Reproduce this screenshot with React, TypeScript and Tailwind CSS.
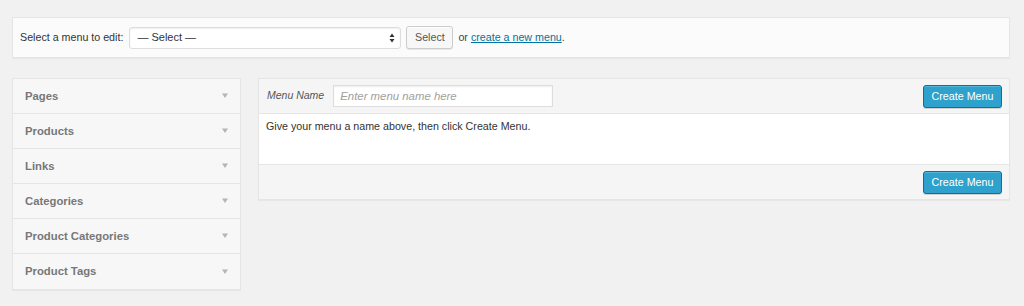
import React from 'react';

const boxes = ['Pages', 'Products', 'Links', 'Categories', 'Product Categories', 'Product Tags'];

function Arrow() {
  return (
    <svg width="8" height="6" viewBox="0 0 8 6" className="shrink-0" aria-hidden="true">
      <path d="M1 0.5h6L4 5z" fill="#b4b4b4" />
    </svg>
  );
}

function CreateButton() {
  return (
    <button className="h-[23px] w-[79px] rounded-[3px] border border-[#0074a2] bg-[#2ea2cc] text-[10.7px] leading-none text-white shadow-[inset_0_1px_0_rgba(120,200,230,0.5),0_1px_0_rgba(0,0,0,0.15)]">
      Create Menu
    </button>
  );
}

export default function App() {
  return (
    <div
      className="h-[306px] w-[1024px] overflow-hidden bg-[#f1f1f1] text-[10.7px] text-[#444]"
      style={{ fontFamily: '"Liberation Sans", Arial, sans-serif' }}
    >
      <div className="ml-[12px] mt-[17px] flex h-[41px] w-[998px] items-center border border-[#e5e5e5] bg-[#fbfbfb] pl-[7px] shadow-[0_1px_1px_rgba(0,0,0,0.04)]">
        <span className="text-[#333]">Select a menu to edit:</span>
        <div className="ml-[6px] flex h-[22px] w-[272px] items-center justify-between rounded-[3px] border border-[#ddd] bg-white pl-[7px] pr-[5px] text-[11px] text-[#333] shadow-[inset_0_1px_2px_rgba(0,0,0,0.07)]">
          <span>— Select —</span>
          <svg width="6" height="10" viewBox="0 0 6 10" aria-hidden="true">
            <path d="M3 0.5 5.5 4H0.5z M3 9.5 0.5 6h5z" fill="#333" />
          </svg>
        </div>
        <button className="ml-[5px] h-[23px] w-[47px] rounded-[3px] border border-[#ccc] bg-[#f7f7f7] text-[10.7px] text-[#555] shadow-[inset_0_1px_0_#fff,0_1px_0_rgba(0,0,0,0.08)]">
          Select
        </button>
        <span className="ml-[5px] text-[#444]">
          or{' '}
          <a className="text-[#0074a2] underline" href="#">
            create a new menu
          </a>
          .
        </span>
      </div>

      <div className="ml-[12px] mt-[20px] flex items-start gap-[17px]">
        <div className="w-[229px] border border-[#e5e5e5] bg-[#f7f7f7] shadow-[0_1px_1px_rgba(0,0,0,0.04)]">
          {boxes.map((b, i) => (
            <div
              key={b}
              className={`flex h-[35px] items-center justify-between pl-[12px] pr-[11px] ${
                i < boxes.length - 1 ? 'border-b border-[#e5e5e5]' : ''
              }`}
            >
              <span className="text-[11.3px] font-bold text-[#777]">{b}</span>
              <Arrow />
            </div>
          ))}
        </div>

        <div className="w-[752px] border border-[#e5e5e5] bg-[#f5f5f5] shadow-[0_1px_1px_rgba(0,0,0,0.04)]">
          <div className="flex h-[35px] items-center justify-between border-b border-[#e5e5e5] pl-[8px] pr-[7px]">
            <div className="flex items-center">
              <span className="text-[10.5px] italic text-[#555]">Menu Name</span>
              <input
                className="ml-[9px] h-[22px] w-[220px] border border-[#ddd] bg-white px-[6px] text-[11.4px] italic text-[#333] shadow-[inset_0_1px_2px_rgba(0,0,0,0.07)] outline-none placeholder:text-[#a0a0a0]"
                placeholder="Enter menu name here"
              />
            </div>
            <CreateButton />
          </div>
          <div className="h-[50px] bg-white pl-[7px] pt-[4px] text-[#333]">
            Give your menu a name above, then click Create Menu.
          </div>
          <div className="flex h-[35px] items-center justify-end border-t border-[#e5e5e5] pr-[7px]">
            <CreateButton />
          </div>
        </div>
      </div>
    </div>
  );
}
